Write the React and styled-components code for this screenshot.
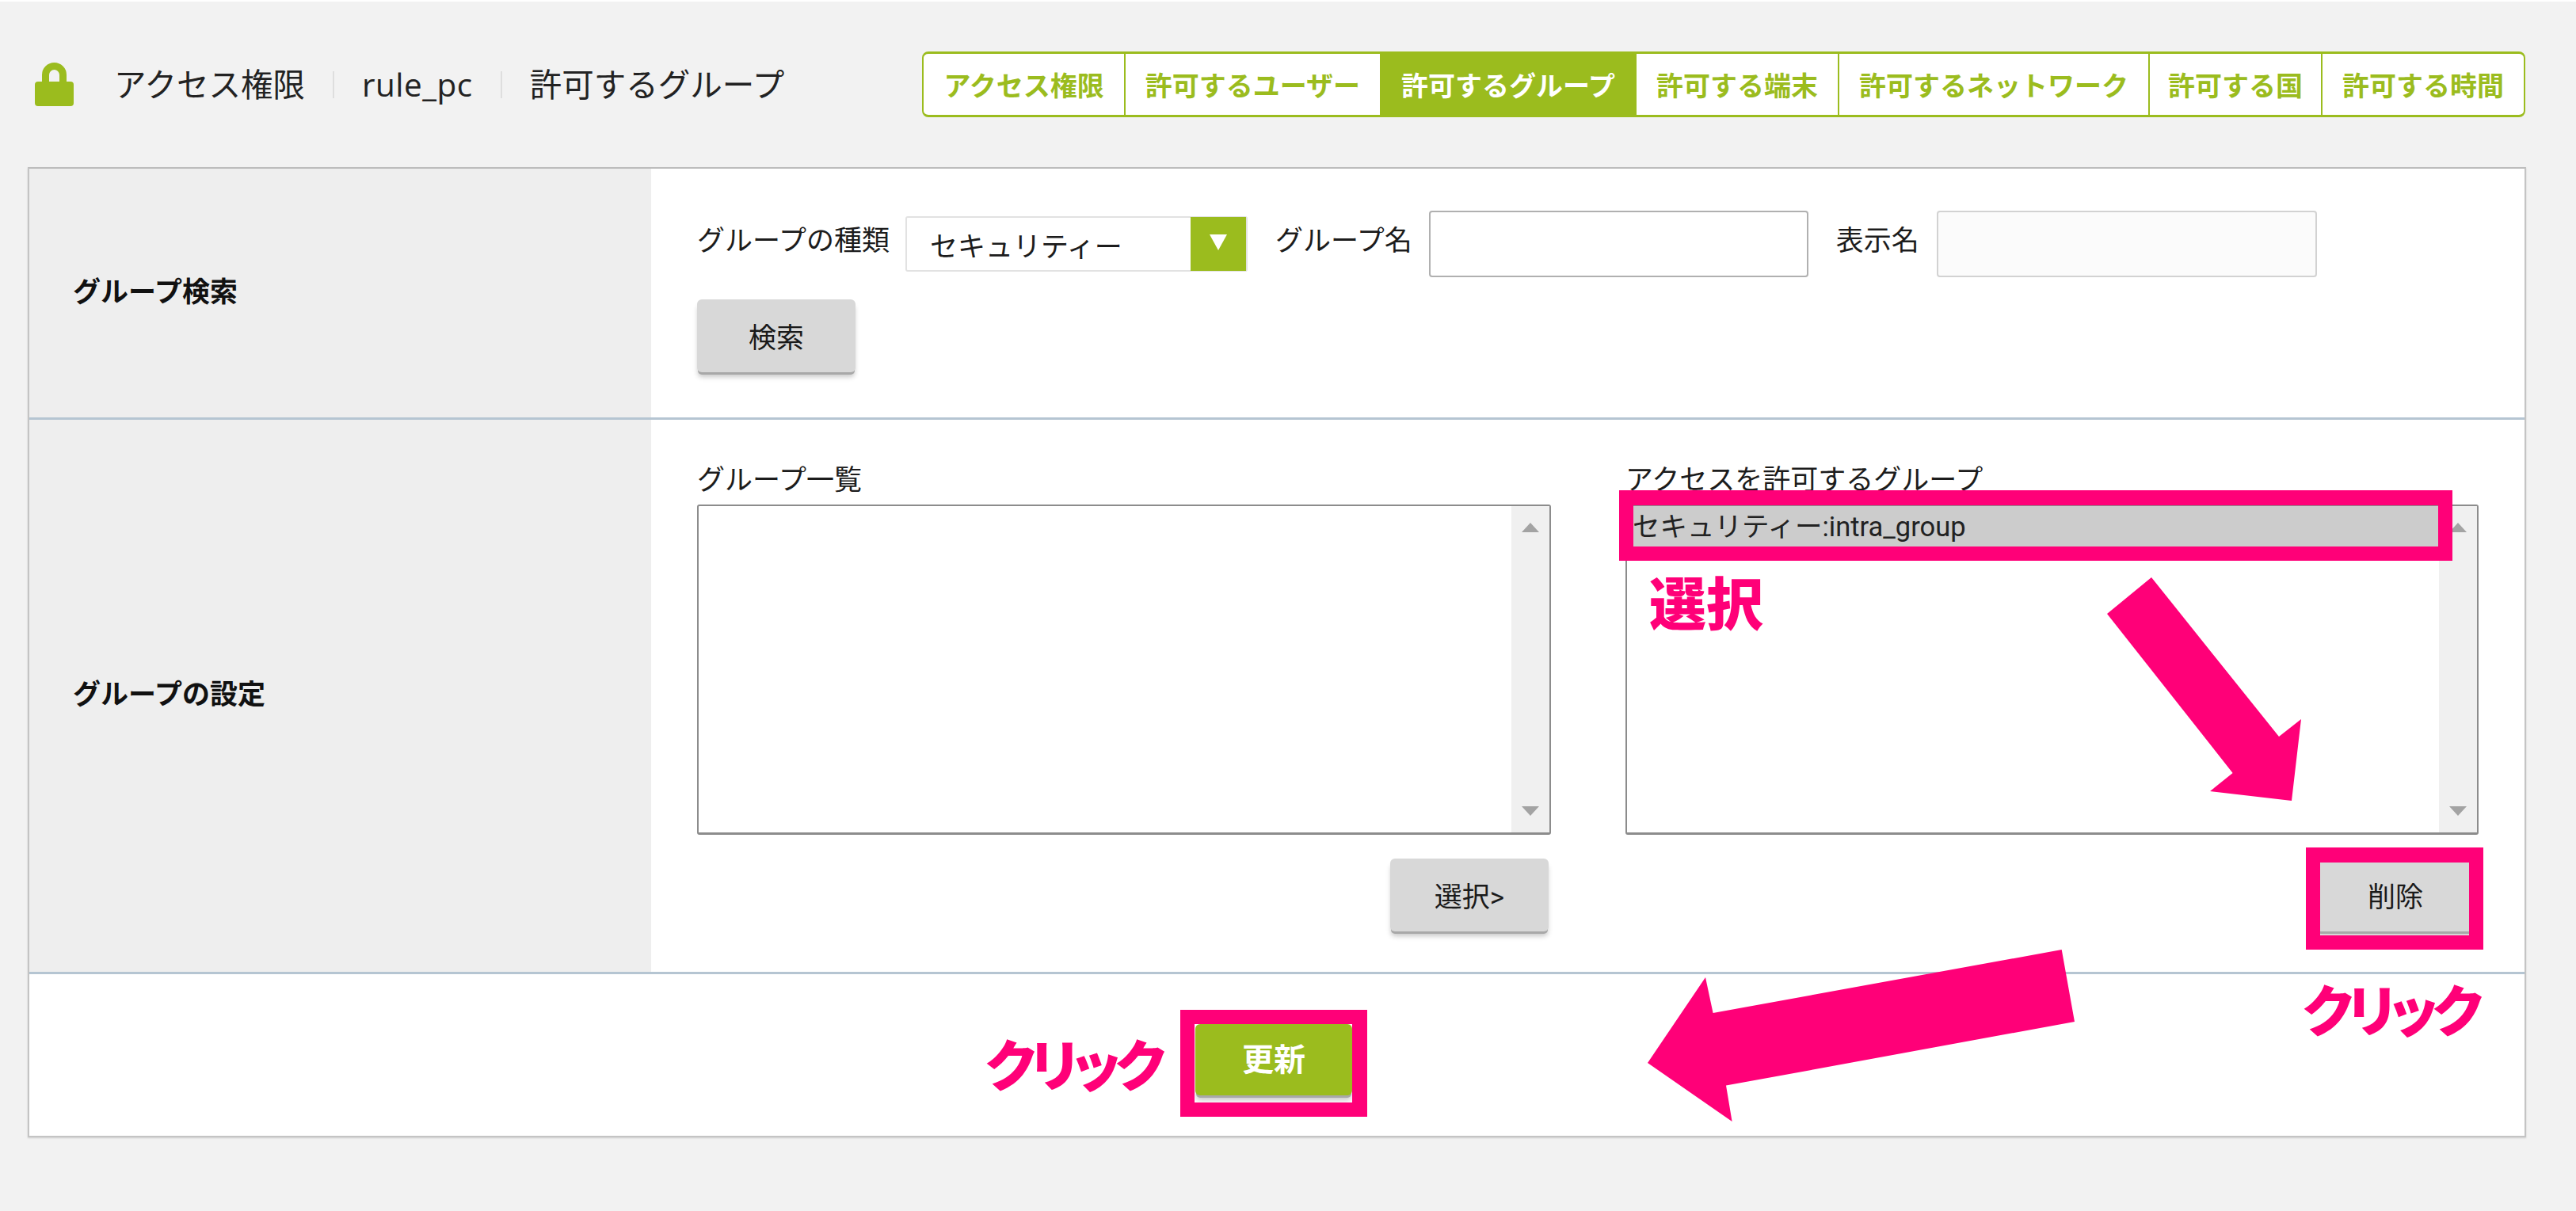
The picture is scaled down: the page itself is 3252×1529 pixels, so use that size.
import React from 'react';
import styled, { createGlobalStyle } from 'styled-components';

const GREEN = '#9bbc1e';
const PINK = '#ff0078';
const FONT = 'Roboto, "Noto Sans CJK JP", sans-serif';

const Global = createGlobalStyle`
  html, body { margin: 0; padding: 0; background: #f2f2f2; }
  * { box-sizing: border-box; }
`;

const Page = styled.div`
  position: relative;
  width: 3252px;
  height: 1529px;
  overflow: hidden;
  background: #f2f2f2;
  border-top: 2px solid #fff;
  font-family: ${FONT};
  font-size: 35px;
  color: #1c1c1c;
`;

const Header = styled.header`
  height: 209px;
  padding: 0 64px 0 44px;
  display: flex;
  align-items: center;
  justify-content: space-between;
`;

const Crumbs = styled.div`
  display: flex;
  align-items: center;
  font-family: "Open Sans", "Noto Sans CJK JP", sans-serif;
  font-size: 40.5px;
  line-height: 48px;
  color: #222;
`;

const LockIcon = styled.svg`
  width: 49px;
  height: 55px;
  margin-right: 51px;
  flex: none;
`;

const CrumbDivider = styled.span`
  width: 2px;
  height: 34px;
  margin: 0 35px;
  background: #dedede;
`;

const RuleName = styled.span`
  letter-spacing: 0.5px;
`;

const Tabs = styled.nav`
  display: flex;
  height: 83px;
`;

const Tab = styled.a`
  display: flex;
  align-items: center;
  padding: 0 ${p => (p.$tight ? 23 : 25)}px;
  margin-left: -2px;
  border: 2px solid ${GREEN};
  border-top-width: 3px;
  border-bottom-width: 3px;
  background: ${p => (p.$active ? GREEN : '#fff')};
  color: ${p => (p.$active ? '#fff' : GREEN)};
  font-family: "Noto Sans CJK JP", sans-serif;
  font-size: 34px;
  font-weight: 700;
  white-space: nowrap;
  &:first-child { border-radius: 8px 0 0 8px; margin-left: 0; }
  &:last-child { border-radius: 0 8px 8px 0; }
`;

const Card = styled.main`
  width: 3154px;
  height: 1225px;
  margin-left: 35px;
  background: #fff;
  border: 2px solid #c4c4c4;
  border-top-color: #bcbcbc;
  box-shadow: 0 1px 2px rgba(0, 0, 0, 0.15);
  display: grid;
  grid-template-rows: 317px 700px 1fr;
`;

const Row = styled.section`
  display: grid;
  grid-template-columns: 785px 1fr;
  border-bottom: 3px solid #b5c5d2;
`;

const Side = styled.h2`
  margin: 0;
  padding: 0 0 10px 55px;
  display: flex;
  align-items: center;
  background: #eeeeee;
  font-size: 35px;
  font-weight: 700;
  color: #111;
`;

const SearchBody = styled.div`
  padding: 53px 0 0 58px;
  display: flex;
  flex-direction: column;
`;

const SearchLine = styled.div`
  display: flex;
  align-items: center;
  height: 84px;
  margin-bottom: 28px;
`;

const FieldLabel = styled.label`
  margin: ${p => p.$margin};
  line-height: 38px;
  position: relative;
  top: -3px;
  white-space: nowrap;
`;

const SelectBox = styled.div`
  width: 432px;
  height: 70px;
  display: flex;
  align-items: center;
  justify-content: space-between;
  background: #fff;
  border: 2px solid #e2e2e2;
  border-radius: 3px;
  padding-left: 29px;
`;

const SelectArrow = styled.span`
  width: 70px;
  height: 68px;
  display: flex;
  justify-content: center;
  padding-top: 22px;
  background: ${GREEN};
`;

const Caret = styled.svg`
  width: 22px;
  height: 20px;
`;

const TextInput = styled.input`
  width: ${p => p.$w}px;
  height: 84px;
  border: 2px solid ${p => (p.$disabled ? '#d2d2d2' : '#b0b0b0')};
  border-radius: 4px;
  background: ${p => (p.$disabled ? '#fbfbfb' : '#fff')};
`;

const Button = styled.button`
  width: ${p => p.$w || 200}px;
  height: ${p => p.$h || 92}px;
  padding: 0 0 ${p => (p.$primary ? 6 : 2)}px;
  flex: none;
  border: none;
  border-radius: 6px;
  background: ${p => (p.$primary ? GREEN : '#d8d8d8')};
  color: ${p => (p.$primary ? '#fff' : '#1a1a1a')};
  font-family: ${FONT};
  font-size: ${p => (p.$primary ? 40 : 35)}px;
  font-weight: ${p => (p.$primary ? 700 : 400)};
  box-shadow: 0 4px 0 -1px #a8a8a8, 0 7px 6px -1px rgba(0, 0, 0, 0.22);
`;

const SettingBody = styled.div`
  padding: 58px 0 0 58px;
  display: grid;
  grid-template-columns: 1078px 1077px;
  column-gap: 94px;
`;

const Column = styled.div`
  display: flex;
  flex-direction: column;
`;

const ColumnTitle = styled.div`
  height: 38px;
  line-height: 38px;
  margin-bottom: 11px;
  white-space: nowrap;
`;

const ListBox = styled.div`
  height: 417px;
  display: flex;
  border: 2px solid #8c8c8c;
  border-bottom-width: 3px;
  border-radius: 3px;
  background: #fff;
  overflow: hidden;
`;

const ListItems = styled.div`
  flex: 1;
`;

const ListOption = styled.div`
  height: 56px;
  line-height: 52px;
  padding-left: 7px;
  background: #cccccc;
  color: #222;
  font-size: 34.5px;
  white-space: nowrap;
`;

const Scrollbar = styled.div`
  width: 48px;
  padding: 21px 0;
  display: flex;
  flex-direction: column;
  justify-content: space-between;
  align-items: center;
  background: #f0f0f0;
`;

const ScrollArrow = styled.svg`
  width: 22px;
  height: 12px;
`;

const ColumnAction = styled.div`
  display: flex;
  justify-content: flex-end;
  margin-top: 30px;
  padding-right: ${p => p.$right}px;
`;

const Footer = styled.section`
  padding: 63px 8px 0 0;
  display: flex;
  justify-content: center;
  align-items: flex-start;
`;

const Callout = styled.div`
  position: absolute;
  left: ${p => p.$x}px;
  top: ${p => p.$y}px;
  width: ${p => p.$w}px;
  height: ${p => p.$h}px;
  border-style: solid;
  border-color: ${PINK};
  border-width: ${p => p.$bw};
`;

const PinkText = styled.span`
  position: absolute;
  left: ${p => p.$x}px;
  top: ${p => p.$y}px;
  color: ${PINK};
  font-family: "Noto Sans CJK JP", sans-serif;
  font-weight: 900;
  font-size: ${p => p.$size}px;
  line-height: 1;
  letter-spacing: ${p => p.$spacing || 0}px;
  font-feature-settings: "palt";
  white-space: nowrap;
`;

const Arrow = styled.svg`
  position: absolute;
  left: ${p => p.$x}px;
  top: ${p => p.$y}px;
  fill: ${PINK};
`;

const UpArrow = () => (
  <ScrollArrow viewBox="0 0 22 12"><polygon points="11,0 22,12 0,12" fill="#a3a3a3" /></ScrollArrow>
);
const DownArrow = () => (
  <ScrollArrow viewBox="0 0 22 12"><polygon points="0,0 22,0 11,12" fill="#a3a3a3" /></ScrollArrow>
);

const TABS = ['アクセス権限', '許可するユーザー', '許可するグループ', '許可する端末', '許可するネットワーク', '許可する国', '許可する時間'];

export default function App() {
  return (
    <Page>
      <Global />
      <Header>
        <Crumbs>
          <LockIcon viewBox="0 0 49 55">
            <path d="M13.5 26V15.5a11 11 0 0 1 22 0V26" fill="none" stroke={GREEN} strokeWidth="9" />
            <rect x="0" y="24" width="49" height="31" rx="4" fill={GREEN} />
          </LockIcon>
          <span>アクセス権限</span>
          <CrumbDivider />
          <RuleName>rule_pc</RuleName>
          <CrumbDivider />
          <span>許可するグループ</span>
        </Crumbs>
        <Tabs>
          {TABS.map((t, i) => <Tab key={t} $active={i === 2} $tight={i === 5}>{t}</Tab>)}
        </Tabs>
      </Header>
      <Card>
        <Row>
          <Side>グループ検索</Side>
          <SearchBody>
            <SearchLine>
              <FieldLabel $margin="0 20px 0 0">グループの種類</FieldLabel>
              <SelectBox>
                <span>セキュリティー</span>
                <SelectArrow>
                  <Caret viewBox="0 0 22 20"><polygon points="0,0 22,0 11,20" fill="#fff" /></Caret>
                </SelectArrow>
              </SelectBox>
              <FieldLabel $margin="0 21px 0 35px">グループ名</FieldLabel>
              <TextInput $w={479} />
              <FieldLabel $margin="0 22px 0 35px">表示名</FieldLabel>
              <TextInput $w={480} $disabled />
            </SearchLine>
            <div><Button>検索</Button></div>
          </SearchBody>
        </Row>
        <Row>
          <Side>グループの設定</Side>
          <SettingBody>
            <Column>
              <ColumnTitle>グループ一覧</ColumnTitle>
              <ListBox>
                <ListItems />
                <Scrollbar><UpArrow /><DownArrow /></Scrollbar>
              </ListBox>
              <ColumnAction $right={3}><Button>選択&gt;</Button></ColumnAction>
            </Column>
            <Column>
              <ColumnTitle>アクセスを許可するグループ</ColumnTitle>
              <ListBox>
                <ListItems><ListOption>セキュリティー:intra_group</ListOption></ListItems>
                <Scrollbar><UpArrow /><DownArrow /></Scrollbar>
              </ListBox>
              <ColumnAction $right={5}><Button>削除</Button></ColumnAction>
            </Column>
          </SettingBody>
        </Row>
        <Footer>
          <Button $primary $w={198} $h={90}>更新</Button>
        </Footer>
      </Card>

      <Callout $x={2044} $y={617} $w={1052} $h={89} $bw="19px 18px 18px 18px" />
      <Callout $x={2911} $y={1068} $w={224} $h={129} $bw="19px 18px 18px 18px" />
      <Callout $x={1490} $y={1273} $w={236} $h={135} $bw="18px 19px 18px 18px" />

      <PinkText $x={2082} $y={720} $size={72}>選択</PinkText>
      <PinkText $x={2907} $y={1236} $size={70} $spacing={-6}>クリック</PinkText>
      <PinkText $x={1244} $y={1305} $size={70} $spacing={-6}>クリック</PinkText>

      <Arrow $x={2660} $y={727} width="245" height="282" viewBox="0 0 245 282">
        <polygon points="56,0 0,46 158.6,247 130,270 233,282 245,179 217,201" />
      </Arrow>
      <Arrow $x={2080} $y={1197} width="539" height="217" viewBox="0 0 539 217">
        <polygon points="522.7,0 539,91 99,171.6 106.6,217 0,143 73,35 82.6,80" />
      </Arrow>
    </Page>
  );
}
